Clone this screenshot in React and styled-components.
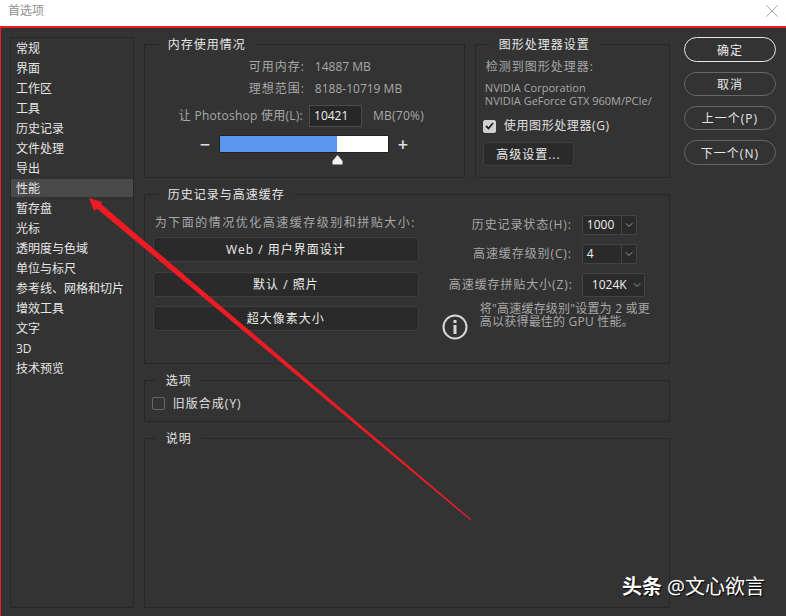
import React from 'react'
import styled, { createGlobalStyle } from 'styled-components'
import { LuChevronDown, LuX } from 'react-icons/lu'

const Global = createGlobalStyle`
html, body {
    margin: 0;
    padding: 0;
    background: #333333;
}
#root {
    width: 786px;
    height: 616px;
    overflow: hidden;
}
`

const FONT = `"Open Sans", "Noto Sans CJK SC", sans-serif`

const Page = styled.div`
position: relative;
width: 786px;
height: 616px;
overflow: hidden;
font-family: ${FONT};
font-size: 12px;
line-height: 16px;
color: #cfcfcf;
`
const TitleBar = styled.div`
height: 26px;
box-sizing: border-box;
background: #fff;
display: flex;
align-items: center;
justify-content: space-between;
padding: 0 3px 4px 8px;
color: #8f8f8f;
svg {
    color: #777;
}
`
const Body = styled.div`
height: 590px;
box-sizing: border-box;
background: #333;
border-top: 2px solid #ed1c24;
border-left: 1px solid #ed1c24;
padding: 9px 10px 8px 9px;
display: flex;
`
const Sidebar = styled.ul`
list-style: none;
margin: 0 10px 0 0;
padding: 1px 0 0;
width: 125px;
box-sizing: border-box;
height: 571px;
border: 1px solid #282828;
`
const SideItem = styled.li`
height: 18px;
margin-bottom: 2px;
line-height: 20px;
padding-left: 5px;
color: #e6e6e6;
background: ${p => (p.$active ? '#4a4a4a' : 'transparent')};
`
const Center = styled.div`
width: 526px;
display: flex;
flex-direction: column;
`
const Row = styled.div`
display: flex;
gap: 10px;
`
const Panel = styled.fieldset`
margin: ${p => p.$top || 0}px 0 0;
padding: 0;
min-width: 0;
width: ${p => p.$w || 526}px;
height: ${p => p.$h}px;
box-sizing: border-box;
border: 1px solid #282828;
`
const Legend = styled.legend`
margin-left: ${p => p.$ml || 14}px;
padding: 0 9px;
color: #e6e6e6;
letter-spacing: 1px;
line-height: 14px;
transform: translateY(${p => (p.$flat ? 0 : 1)}px);
`
const InfoRow = styled.div`
display: flex;
height: 22px;
align-items: center;
color: #a8a8a8;
`
const InfoKey = styled.span`
width: 160px;
text-align: right;
margin-right: 10px;
letter-spacing: 1px;
`
const MemoryBody = styled.div`
padding-top: 5px;
`
const UseRow = styled.div`
display: flex;
align-items: center;
margin-top: 5px;
color: #a8a8a8;
padding-left: 34px;
letter-spacing: 0.25px;
`
const NumberBox = styled.div`
width: 53px;
height: 22px;
box-sizing: border-box;
background: #272727;
border: 1px solid #4b4b4b;
color: #f0f0f0;
line-height: 20px;
letter-spacing: 0;
padding-left: 4px;
margin: 0 11px 0 6px;
`
const SliderRow = styled.div`
display: flex;
align-items: center;
margin: 8px 0 0 46px;
color: #e0e0e0;
font-size: 18px;
font-weight: 600;
`
const Sign = styled.span`
width: 28px;
text-align: center;
line-height: 16px;
`
const Track = styled.div`
position: relative;
width: 168px;
height: 16px;
background: #fff;
border: 1px solid #222;
`
const TrackFill = styled.div`
height: 100%;
background: #5a96ee;
`
const Thumb = styled.svg`
position: absolute;
top: 19px;
left: 112px;
`
const GpuBody = styled.div`
padding: 7px 7px 0;
color: #a8a8a8;
`
const GpuHead = styled.div`
letter-spacing: 1px;
line-height: 18px;
padding-left: 3px;
margin-bottom: 5px;
`
const GpuName = styled.div`
font-size: 11px;
line-height: 13px;
padding-left: 2px;
`
const CheckRow = styled.label`
display: flex;
align-items: center;
gap: 8px;
color: #e0e0e0;
letter-spacing: ${p => p.$sp || 0.6}px;
margin: ${p => p.$mt || 0}px 0 0 ${p => p.$ml || 0}px;
`
const Check = styled.span`
width: 13px;
height: 13px;
box-sizing: border-box;
border-radius: 2px;
display: flex;
align-items: center;
justify-content: center;
background: ${p => (p.$on ? '#d0d0d0' : 'transparent')};
border: 1px solid ${p => (p.$on ? '#d0d0d0' : '#666')};
`
const FlatButton = styled.div`
box-sizing: border-box;
background: #2a2a2a;
border: 1px solid #3e3e3e;
border-radius: 3px;
color: #ececec;
letter-spacing: 1px;
text-align: center;
height: ${p => p.$h || 25}px;
line-height: ${p => (p.$h || 25) - 1}px;
width: ${p => p.$w}px;
margin-top: ${p => p.$mt || 0}px;
`
const HistoryBody = styled.div`
display: flex;
padding: 0 0 0 8px;
`
const HistoryLeft = styled.div`
width: 286px;
margin-right: 10px;
`
const HistoryHint = styled.div`
color: #a8a8a8;
letter-spacing: 1.5px;
line-height: 18px;
margin: 13px 0 5px 2px;
white-space: nowrap;
`
const HistoryRight = styled.div`
flex: 1;
padding-top: 9px;
`
const SelectRow = styled.div`
display: flex;
align-items: center;
height: ${p => p.$h || 29}px;
color: #a8a8a8;
`
const SelectLabel = styled.span`
width: 123px;
margin-right: 10px;
text-align: right;
white-space: nowrap;
letter-spacing: 0.9px;
`
const Select = styled.div`
box-sizing: border-box;
width: ${p => p.$w}px;
height: ${p => p.$h || 20}px;
background: #2a2a2a;
border: 1px solid #444;
border-radius: 2px;
display: flex;
align-items: center;
color: #eee;
`
const SelectValue = styled.span`
flex: 1;
padding-left: ${p => p.$pad || 4}px;
height: 100%;
display: flex;
align-items: center;
border-right: ${p => (p.$split ? '1px solid #444' : 'none')};
`
const Arrow = styled.span`
display: flex;
width: 14px;
justify-content: center;
color: #999;
`
const Note = styled.div`
display: flex;
align-items: flex-start;
`
const NoteText = styled.div`
margin-left: 12px;
color: #a8a8a8;
line-height: 13px;
letter-spacing: 0.2px;
white-space: nowrap;
`
const InfoIcon = styled.svg`
margin: 12px 0 0 -7px;
flex: none;
`
const Actions = styled.div`
margin-left: 14px;
width: 93px;
display: flex;
flex-direction: column;
gap: 10px;
`
const Action = styled.div`
box-sizing: border-box;
height: ${p => (p.$h || 24)}px;
line-height: ${p => (p.$h || 24)}px;
border: ${p => (p.$primary ? '1px solid #e6e6e6' : '1px solid #666')};
border-radius: 13px;
text-align: center;
color: #e8e8e8;
letter-spacing: 1px;
`
const Mark = styled.svg`
position: absolute;
left: 0;
top: 0;
pointer-events: none;
`
const Watermark = styled.div`
position: absolute;
left: 622px;
top: 575px;
font-size: 20px;
line-height: 24px;
color: #fff;
white-space: nowrap;
text-shadow: 1px 1px 1px #000;
b {
    font-weight: 700;
    margin-right: 5px;
}
`

const MENU = ['常规', '界面', '工作区', '工具', '历史记录', '文件处理', '导出', '性能', '暂存盘', '光标', '透明度与色域', '单位与标尺', '参考线、网格和切片', '增效工具', '文字', '3D', '技术预览']

function App() {
    return (
        <Page>
            <Global />
            <TitleBar>
                <span>首选项</span>
                <LuX size={22} strokeWidth={0.7} />
            </TitleBar>
            <Body>
                <Sidebar>
                    {MENU.map(item => <SideItem key={item} $active={item === '性能'}>{item}</SideItem>)}
                </Sidebar>
                <Center>
                    <Row>
                        <Panel $w={321} $h={141}>
                            <Legend>内存使用情况</Legend>
                            <MemoryBody>
                                <InfoRow><InfoKey>可用内存:</InfoKey>14887 MB</InfoRow>
                                <InfoRow><InfoKey>理想范围:</InfoKey>8188-10719 MB</InfoRow>
                                <UseRow>
                                    让 Photoshop 使用(L):
                                    <NumberBox>10421</NumberBox>
                                    MB(70%)
                                </UseRow>
                                <SliderRow>
                                    <Sign>−</Sign>
                                    <Track>
                                        <TrackFill style={{ width: '70%' }} />
                                        <Thumb width="11" height="10" viewBox="0 0 11 10">
                                            <path d="M5.5 0 L10.5 6 V9.5 H0.5 V6 Z" fill="#f2f2f2" />
                                        </Thumb>
                                    </Track>
                                    <Sign>+</Sign>
                                </SliderRow>
                            </MemoryBody>
                        </Panel>
                        <Panel $w={195} $h={141}>
                            <Legend>图形处理器设置</Legend>
                            <GpuBody>
                                <GpuHead>检测到图形处理器:</GpuHead>
                                <GpuName>NVIDIA Corporation</GpuName>
                                <GpuName>NVIDIA GeForce GTX 960M/PCIe/</GpuName>
                                <CheckRow $mt={11}>
                                    <Check $on>
                                        <svg width="9" height="8" viewBox="0 0 9 8"><path d="M1 4 L3.5 6.5 L8 1" fill="none" stroke="#222" strokeWidth="1.8" /></svg>
                                    </Check>
                                    使用图形处理器(G)
                                </CheckRow>
                                <FlatButton $w={91} $h={24} $mt={8}>高级设置...</FlatButton>
                            </GpuBody>
                        </Panel>
                    </Row>
                    <Panel $h={177} $top={9}>
                        <Legend>历史记录与高速缓存</Legend>
                        <HistoryBody>
                            <HistoryLeft>
                                <HistoryHint>为下面的情况优化高速缓存级别和拼贴大小:</HistoryHint>
                                <FlatButton $w={266}>Web / 用户界面设计</FlatButton>
                                <FlatButton $w={266} $mt={10}>默认 / 照片</FlatButton>
                                <FlatButton $w={266} $mt={9}>超大像素大小</FlatButton>
                            </HistoryLeft>
                            <HistoryRight>
                                <SelectRow>
                                    <SelectLabel>历史记录状态(H):</SelectLabel>
                                    <Select $w={55}><SelectValue $split>1000</SelectValue><Arrow><LuChevronDown size={12} /></Arrow></Select>
                                </SelectRow>
                                <SelectRow>
                                    <SelectLabel>高速缓存级别(C):</SelectLabel>
                                    <Select $w={55}><SelectValue $split>4</SelectValue><Arrow><LuChevronDown size={12} /></Arrow></Select>
                                </SelectRow>
                                <SelectRow $h={34}>
                                    <SelectLabel>高速缓存拼贴大小(Z):</SelectLabel>
                                    <Select $w={63} $h={24}><SelectValue $pad={9}>1024K</SelectValue><Arrow><LuChevronDown size={12} /></Arrow></Select>
                                </SelectRow>
                                <Note>
                                    <InfoIcon width="26" height="26" viewBox="0 0 26 26">
                                        <circle cx="13" cy="13" r="11.5" fill="none" stroke="#d8d8d8" strokeWidth="2" />
                                        <rect x="11.5" y="6" width="3" height="3" fill="#d8d8d8" />
                                        <rect x="11.5" y="11" width="3" height="9" fill="#d8d8d8" />
                                    </InfoIcon>
                                    <NoteText>将"高速缓存级别"设置为 2 或更<br />高以获得最佳的 GPU 性能。</NoteText>
                                </Note>
                            </HistoryRight>
                        </HistoryBody>
                    </Panel>
                    <Panel $h={49} $top={10}>
                        <Legend $ml={12} $flat>选项</Legend>
                        <CheckRow $ml={7} $mt={8} $sp={1}>
                            <Check />
                            旧版合成(Y)
                        </CheckRow>
                    </Panel>
                    <Panel $h={177} $top={9}>
                        <Legend $ml={12}>说明</Legend>
                    </Panel>
                </Center>
                <Actions>
                    <Action $primary $h={25}>确定</Action>
                    <Action>取消</Action>
                    <Action>上一个(P)</Action>
                    <Action $h={25}>下一个(N)</Action>
                </Actions>
            </Body>
            <Mark width="786" height="616" viewBox="0 0 786 616">
                <polygon points="89,198 102,202 101,204 471.4,519.5 470.6,520.5 97,208.7 94,211" fill="#ed1c24" />
            </Mark>
            <Watermark><b>头条</b>@文心欲言</Watermark>
        </Page>
    )
}

export default App
